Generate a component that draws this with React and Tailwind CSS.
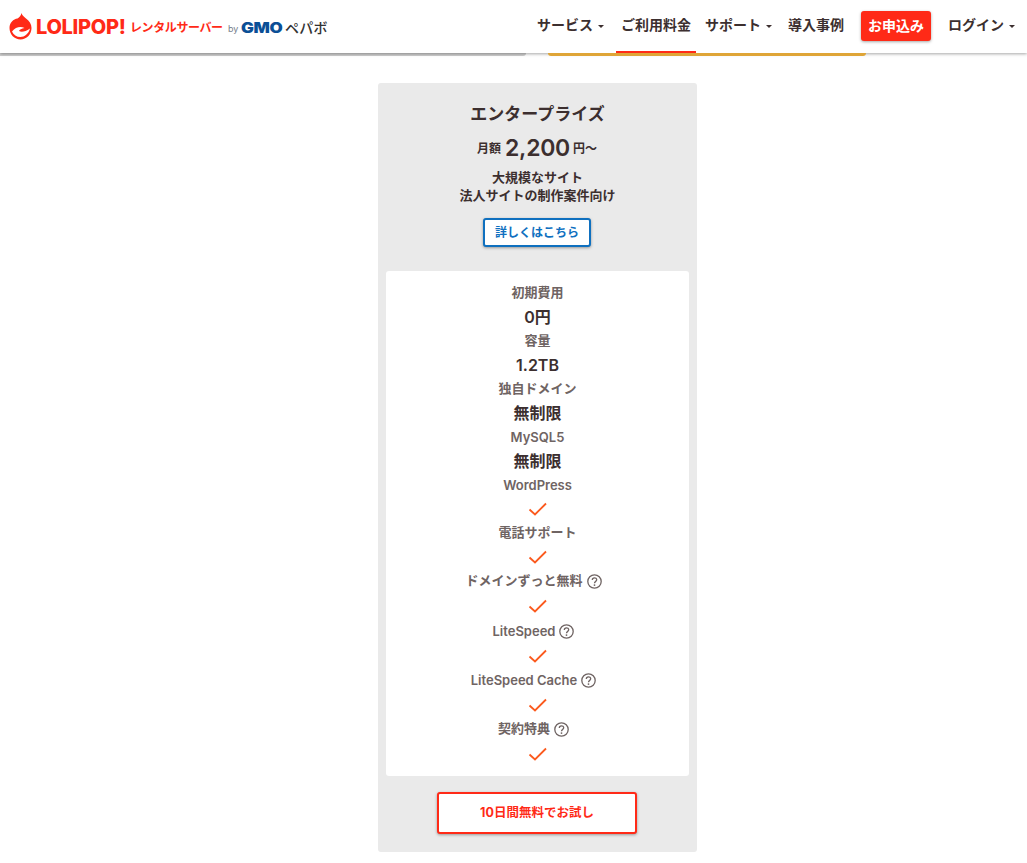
const font = { fontFamily: 'Inter, "Noto Sans CJK JP", sans-serif' };

function Check() {
  return (
    <svg width="20" height="16" viewBox="0 0 20 16" fill="none" className="block">
      <path d="M1.5 8.5 L7 13.5 L18 2.5" stroke="#fb5a1e" strokeWidth="1.8" />
    </svg>
  );
}

function Help() {
  return (
    <svg width="15" height="15" viewBox="0 0 15 15" fill="none" className="ml-[4px] shrink-0">
      <circle cx="7.5" cy="7.5" r="6.7" stroke="#6f6463" strokeWidth="1.3" />
      <path d="M5.3 5.9 C5.3 3.1 9.7 3.1 9.7 5.8 C9.7 7.4 7.5 7.4 7.5 9.3" stroke="#6f6463" strokeWidth="1.3" />
      <circle cx="7.5" cy="11.1" r="0.9" fill="#6f6463" />
    </svg>
  );
}

function Label({ children, help, latin }) {
  return (
    <div className={`h-[24px] flex items-center justify-center text-[13px] font-semibold text-[#6f6463] ${latin ? 'pt-[1px]' : ''} ${help ? 'pr-[8px]' : ''}`}>
      {children}
      {help && <Help />}
    </div>
  );
}

function Value({ children }) {
  return <div className="h-[24px] flex items-center justify-center text-[16px] font-semibold text-[#3c2f2f]">{children}</div>;
}

function CheckRow({ h = 'h-[24px]' }) {
  return <div className={`${h} flex items-center justify-center`}><Check /></div>;
}

function NavItem({ children, caret, active }) {
  return (
    <div className={`relative flex items-center text-[14px] font-semibold text-[#3c2f2f] ${active ? 'self-start h-[54px] border-b-[3px] border-[#ff2a17] pb-[2px] w-[80px] justify-center' : 'h-full pb-[4px]'}`}>
      {children}
      {caret && <span className="ml-[5px] mt-[3px] w-0 h-0 border-x-[3px] border-x-transparent border-t-[3px] border-t-[#3c2f2f]" />}
    </div>
  );
}

function Logo() {
  return (
    <div className="flex items-center">
      <svg width="23" height="27" viewBox="0 0 22 27" className="shrink-0 mb-[1px]">
        <path d="M12 0 C12.5 2 14 3.5 16.5 5.5 C20 8 22 11 22 15 C22 21.5 17 26.5 11 26.5 C5 26.5 0 21.5 0 15 C0 9.5 4 6 8 5.5 C10 4.5 11.5 2.5 12 0 Z" fill="#ff2a17" />
        <path d="M2.5 18.5 C6 14 11 13.2 15 15 C12 15.5 10 16.5 9.5 18 C12 19.5 16 18.6 20.5 15.5 C19 21 15 24 11 24 C7 24 4 22 2.5 18.5 Z" fill="#fff" />
      </svg>
      <span className="ml-[4px] w-[89px] text-[20px] font-extrabold text-[#ff2a17] leading-none tracking-[-0.3px] whitespace-nowrap">LOLIPOP!</span>
      <span className="ml-[5px] mt-[2px] w-[93px] text-[12px] font-bold text-[#ff2a17] leading-none tracking-[-0.4px] whitespace-nowrap">レンタルサーバー</span>
      <span className="ml-[5px] mt-[4px] w-[13px] text-[9px] text-[#77808c] leading-none">by</span>
      <span className="mt-[3px] w-[44px] text-[14px] font-black text-[#0b4f96] leading-none tracking-[-0.3px] scale-x-[1.22] origin-left">GMO</span>
      <span className="mt-[2px] text-[14px] font-medium text-[#333] leading-none tracking-[0.2px]">ペパボ</span>
    </div>
  );
}

export default function App() {
  return (
    <div style={font} className="min-h-[863px] bg-white">
      <header className="relative z-10 h-[53px] bg-white flex items-stretch justify-between pl-[9px] pr-[12px] shadow-[0_1px_3px_rgba(0,0,0,0.35)]">
        <Logo />
        <nav className="flex items-center h-full">
          <NavItem caret>サービス</NavItem>
          <div className="w-[12px]" />
          <NavItem active>ご利用料金</NavItem>
          <div className="w-[9px]" />
          <NavItem caret>サポート</NavItem>
          <div className="w-[16px]" />
          <NavItem>導入事例</NavItem>
          <div className="w-[17px]" />
          <div className="mb-[1px] pb-[2px] h-[30px] w-[70px] flex items-center justify-center rounded-[3px] bg-[#ff2a17] text-white text-[14px] font-bold shadow-[0_1px_3px_rgba(0,0,0,0.35)]">お申込み</div>
          <div className="w-[17px]" />
          <NavItem caret>ログイン</NavItem>
        </nav>
      </header>

      <div className="h-[3px] flex">
        <div className="w-[526px] bg-[#cfcfcf] rounded-br-[3px]" />
        <div className="relative z-20 ml-[22px] w-[318px] bg-[#dfa537] rounded-b-[3px]" />
      </div>

      <main className="flex justify-center pl-[48px] pt-[27px] pb-[11px]">
        <section className="w-[319px] h-[769px] bg-[#eaeaea] rounded-[3px] px-[8px] flex flex-col items-center text-[#3c2f2f]">
          <h2 className="mt-[20px] h-[24px] flex items-center text-[17px] font-bold">エンタープライズ</h2>
          <div className="mt-[5px] h-[32px] flex items-center justify-center pr-[1px]">
            <span className="mt-[2px] text-[12px] font-semibold">月額</span>
            <span className="ml-[4px] text-[23px] font-semibold tracking-[-0.3px]">2,200</span>
            <span className="ml-[3px] mt-[2px] text-[12px] font-semibold">円〜</span>
          </div>
          <p className="mt-[4px] text-[13px] leading-[18px] font-semibold text-center">大規模なサイト<br />法人サイトの制作案件向け</p>
          <div className="mt-[14px] mr-[1px] w-[108px] h-[29px] flex items-center justify-center bg-white border-2 border-[#0f70bf] rounded-[3px] text-[#0f70bf] text-[12px] font-bold shadow-[0_1px_3px_rgba(0,0,0,0.35)]">詳しくはこちら</div>

          <div className="mt-[24px] w-full h-[505px] bg-white rounded-[3px] pt-[10px] flex flex-col">
            <Label>初期費用</Label>
            <Value>0円</Value>
            <Label>容量</Label>
            <Value>1.2TB</Value>
            <Label>独自ドメイン</Label>
            <Value>無制限</Value>
            <Label latin>MySQL5</Label>
            <Value>無制限</Value>
            <Label latin>WordPress</Label>
            <CheckRow />
            <Label>電話サポート</Label>
            <CheckRow />
            <Label help>ドメインずっと無料</Label>
            <CheckRow h="h-[26px]" />
            <Label help latin>LiteSpeed</Label>
            <CheckRow h="h-[25px]" />
            <Label help latin>LiteSpeed Cache</Label>
            <CheckRow h="h-[25px]" />
            <Label help>契約特典</Label>
            <CheckRow h="h-[25px]" />
          </div>

          <div className="mt-[16px] mr-[1px] w-[200px] h-[42px] flex items-center justify-center bg-white border-2 border-[#ff2a17] rounded-[3px] text-[#ff2a17] text-[12.5px] font-bold shadow-[0_1px_3px_rgba(0,0,0,0.35)]">10日間無料でお試し</div>
        </section>
      </main>
    </div>
  );
}
